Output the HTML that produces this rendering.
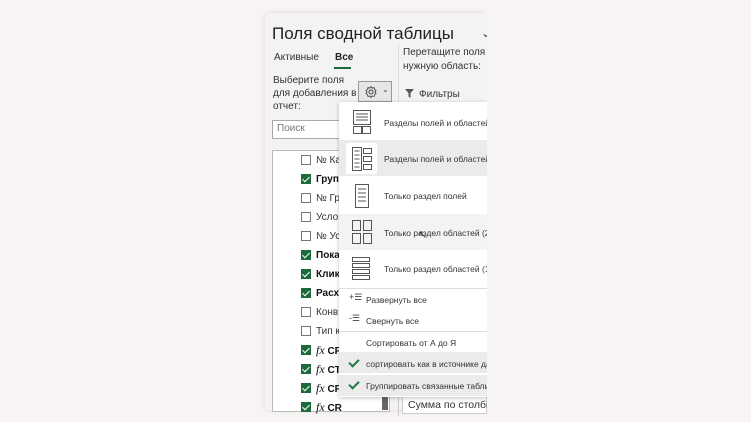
<!DOCTYPE html>
<html><head><meta charset="utf-8"><style>
*{margin:0;padding:0;box-sizing:border-box}
body{width:751px;height:422px;background:#f8f4f4;font-family:"Liberation Sans",sans-serif;position:relative;overflow:hidden;color:#222}
.a{position:absolute;white-space:nowrap}
.panel{position:absolute;left:265px;top:13px;width:222px;height:397px;background:#f3f3f3;border-radius:4px;box-shadow:0 0 6px rgba(0,0,0,.12);overflow:hidden}
.cb{position:absolute;width:10px;height:10px;border:1px solid #777;background:#fff}
.cb.on{background:#1d6b3c;border-color:#1d6b3c}
.cb.on:after{content:"";position:absolute;left:2px;top:0px;width:3px;height:6px;border:solid #fff;border-width:0 1.5px 1.5px 0;transform:rotate(45deg)}
.t{font-size:10px;color:#333}
.menu{position:absolute;left:339px;top:102px;width:148px;height:295px;background:#fff;box-shadow:0 1px 4px rgba(0,0,0,.25);overflow:hidden}
.mi{position:absolute;left:0;width:150px;font-size:8.5px;color:#333}
.ck{position:absolute;width:10px;height:6px;border:solid #1d7a44;border-width:0 0 2px 2px;transform:rotate(-45deg)}
</style></head><body>
<div class="panel"></div>
<div class="a" style="left:272px;top:24px;font-size:17px;color:#222">Поля сводной таблицы</div>
<div class="a" style="left:481px;top:26px;font-size:12px;color:#444">⌄</div>
<div class="a t" style="left:274px;top:52px;font-size:10px">Активные</div>
<div class="a t" style="left:335px;top:52px;font-size:10px;font-weight:bold;color:#222">Все</div>
<div class="a" style="left:334px;top:67px;width:17px;height:2px;background:#1d6b3c"></div>
<div class="a" style="left:398px;top:44px;width:1px;height:60px;background:#ddd"></div>
<div class="a t" style="left:403px;top:46px;line-height:14px;font-size:10px">Перетащите поля в<br>нужную область:</div>
<div class="a t" style="left:273px;top:74px;line-height:13px;font-size:10px">Выберите поля<br>для добавления в<br>отчет:</div>
<div class="a" style="left:358px;top:81px;width:34px;height:21px;border:1px solid #999;background:#e6e6e6"></div>
<svg class="a" style="left:364px;top:85px" width="14" height="14" viewBox="0 0 14 14"><circle cx="7" cy="7" r="2" fill="none" stroke="#444"/><path d="M7 1.5l1.2 1.5 1.8-.5.5 1.8 1.5 1.2-1 1.5 1 1.5-1.5 1.2-.5 1.8-1.8-.5L7 12.5 5.8 11 4 11.5 3.5 9.7 2 8.5 3 7 2 5.5 3.5 4.3 4 2.5l1.8.5z" fill="none" stroke="#444" stroke-width=".9"/></svg>
<div class="a" style="left:382px;top:85px;font-size:8px;color:#444">⌄</div>
<svg class="a" style="left:405px;top:89px" width="9" height="9"><path d="M0 0h9L5.5 4v5L3.5 7.5V4z" fill="#555"/></svg>
<div class="a t" style="left:419px;top:89px;font-size:10px">Фильтры</div>
<div class="a" style="left:272px;top:120px;width:70px;height:19px;border:1px solid #aaa;background:#fff"></div>
<div class="a" style="left:277px;top:123px;font-size:10px;color:#777">Поиск</div>
<div class="a" style="left:272px;top:150px;width:118px;height:262px;border:1px solid #bbb;background:#fff"></div>
<div class="a" style="left:382px;top:396px;width:6px;height:14px;background:#666"></div>
<div class="a" style="left:398px;top:396px;width:1px;height:20px;background:#ccc"></div>
<div class="a" style="left:402px;top:396px;width:85px;height:18px;background:#fff;border:1px solid #ccc"></div>
<div class="a t" style="left:408px;top:399px;font-size:10.5px">Сумма по столбцу</div>

<div class="cb" style="left:301px;top:155px"></div><div class="a t" style="left:316px;top:155px">№ Ка</div>
<div class="cb on" style="left:301px;top:174px"></div><div class="a t" style="left:316px;top:174px;font-weight:bold;color:#111">Групп</div>
<div class="cb" style="left:301px;top:193px"></div><div class="a t" style="left:316px;top:193px">№ Гр</div>
<div class="cb" style="left:301px;top:212px"></div><div class="a t" style="left:316px;top:212px">Услов</div>
<div class="cb" style="left:301px;top:231px"></div><div class="a t" style="left:316px;top:231px">№ Ус</div>
<div class="cb on" style="left:301px;top:250px"></div><div class="a t" style="left:316px;top:250px;font-weight:bold;color:#111">Пока</div>
<div class="cb on" style="left:301px;top:269px"></div><div class="a t" style="left:316px;top:269px;font-weight:bold;color:#111">Клик</div>
<div class="cb on" style="left:301px;top:288px"></div><div class="a t" style="left:316px;top:288px;font-weight:bold;color:#111">Расхо</div>
<div class="cb" style="left:301px;top:307px"></div><div class="a t" style="left:316px;top:307px">Конв</div>
<div class="cb" style="left:301px;top:326px"></div><div class="a t" style="left:316px;top:326px">Тип к</div>
<div class="cb on" style="left:301px;top:345px"></div><div class="a t" style="left:316px;top:343px;font-weight:bold;color:#111"><i style="font-family:'Liberation Serif';font-size:12px;font-weight:normal">fx</i> CF</div>
<div class="cb on" style="left:301px;top:364px"></div><div class="a t" style="left:316px;top:362px;font-weight:bold;color:#111"><i style="font-family:'Liberation Serif';font-size:12px;font-weight:normal">fx</i> CT</div>
<div class="cb on" style="left:301px;top:383px"></div><div class="a t" style="left:316px;top:381px;font-weight:bold;color:#111"><i style="font-family:'Liberation Serif';font-size:12px;font-weight:normal">fx</i> CF</div>
<div class="cb on" style="left:301px;top:402px"></div><div class="a t" style="left:316px;top:400px;font-weight:bold;color:#111"><i style="font-family:'Liberation Serif';font-size:12px;font-weight:normal">fx</i> CR</div>

<div class="menu">
 <div class="mi" style="top:38px;height:36px;background:#ebebeb"></div>
 <div class="a" style="left:7px;top:41px;width:31px;height:31px;background:#fff"></div>
 <div class="mi" style="top:112px;height:36px;background:#f3f3f3"></div>
 <div class="mi" style="top:186px;height:1px;background:#ddd"></div>
 <div class="mi" style="top:229px;height:1px;background:#ddd"></div>
 <div class="mi" style="top:250px;height:21px;background:#ebebeb"></div>
 <div class="mi" style="top:273px;height:21px;background:#ebebeb"></div>
 <div class="a" style="left:45px;top:16px;font-size:8.5px;color:#333">Разделы полей и областей р</div>
 <div class="a" style="left:45px;top:52px;font-size:8.5px;color:#333">Разделы полей и областей р</div>
 <div class="a" style="left:45px;top:89px;font-size:8.5px;color:#333">Только раздел полей</div>
 <div class="a" style="left:45px;top:126px;font-size:8.5px;color:#333">Только раздел областей (2</div>
 <div class="a" style="left:45px;top:162px;font-size:8.5px;color:#333">Только раздел областей (1</div>
 <div class="a" style="left:27px;top:193px;font-size:8.5px;color:#333">Развернуть все</div>
 <div class="a" style="left:27px;top:214px;font-size:8.5px;color:#333">Свернуть все</div>
 <div class="a" style="left:27px;top:236px;font-size:8.5px;color:#333">Сортировать от А до Я</div>
 <div class="a" style="left:27px;top:257px;font-size:8.5px;color:#333">сортировать как в источнике дан</div>
 <div class="a" style="left:27px;top:279px;font-size:8.5px;color:#333">Группировать связанные таблицы</div>
 <div class="ck" style="left:10px;top:257px"></div>
 <div class="ck" style="left:10px;top:279px"></div>
 <div class="a" style="left:10px;top:190px;font-size:9px;color:#444">+☰</div>
 <div class="a" style="left:10px;top:211px;font-size:9px;color:#444">-☰</div>
 <svg class="a" style="left:14px;top:8px" width="18" height="24" fill="none" stroke="#555"><rect x=".5" y=".5" width="17" height="14"/><path d="M3 4h12M3 7h12M3 10h12"/><rect x=".5" y="16.5" width="8" height="7"/><rect x="9.5" y="16.5" width="8" height="7"/></svg>
 <svg class="a" style="left:13px;top:45px" width="20" height="24" fill="none" stroke="#555"><rect x=".5" y=".5" width="9" height="23"/><path d="M2.5 4h5M2.5 8h5M2.5 12h5M2.5 16h5M2.5 20h5"/><rect x="11.5" y="1.5" width="8" height="5"/><rect x="11.5" y="9.5" width="8" height="5"/><rect x="11.5" y="17.5" width="8" height="5"/></svg>
 <svg class="a" style="left:16px;top:82px" width="14" height="24" fill="none" stroke="#555"><rect x=".5" y=".5" width="13" height="23"/><path d="M3 5h8M3 9h8M3 13h8M3 17h8"/></svg>
 <svg class="a" style="left:13px;top:118px" width="20" height="24" fill="none" stroke="#555"><rect x=".5" y=".5" width="8" height="10"/><rect x="11.5" y=".5" width="8" height="10"/><rect x=".5" y="13.5" width="8" height="10"/><rect x="11.5" y="13.5" width="8" height="10"/></svg>
 <svg class="a" style="left:13px;top:155px" width="18" height="24" fill="none" stroke="#555"><rect x=".5" y=".5" width="17" height="4"/><rect x=".5" y="6.5" width="17" height="4"/><rect x=".5" y="12.5" width="17" height="4"/><rect x=".5" y="18.5" width="17" height="4"/></svg>
</div>
<div class="a" style="left:418px;top:228px;font-size:11px;color:#333">↖</div>
<div class="a" style="left:487px;top:0;width:264px;height:422px;background:#f8f4f4"></div>
</body></html>
